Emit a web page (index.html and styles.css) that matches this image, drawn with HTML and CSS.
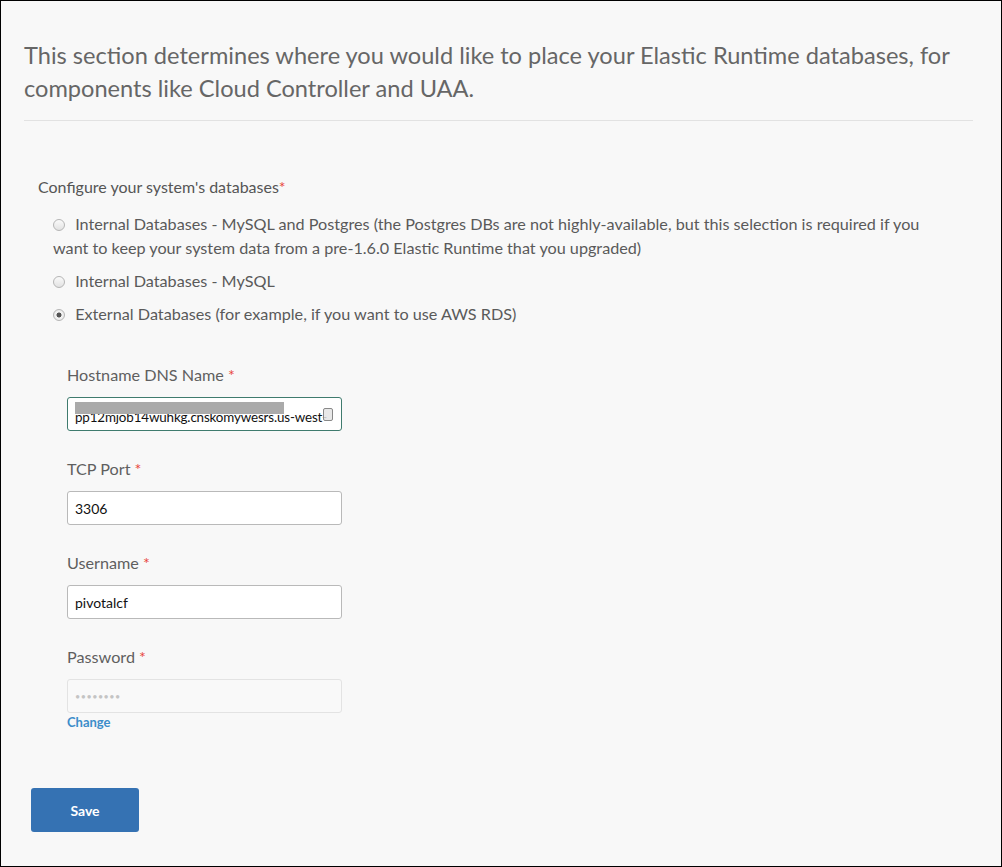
FILE: index.html
```html
<!DOCTYPE html>
<html>
<head>
<meta charset="utf-8">
<link rel="stylesheet" href="styles.css">
</head>
<body>
<div class="frame">
  <div class="intro">
    <p class="intro-text">This section determines where you would like to place your Elastic Runtime databases, for components like Cloud Controller and UAA.</p>
  </div>
  <form class="form">
    <div class="group-label">Configure your system's databases<span class="req">*</span></div>
    <div class="radios">
      <label class="radio-row"><input type="radio" name="db" class="radio"> Internal Databases - MySQL and Postgres (the Postgres DBs are not highly-available, but this selection is required if you want to keep your system data from a pre-1.6.0 Elastic Runtime that you upgraded)</label>
      <label class="radio-row"><input type="radio" name="db" class="radio"> Internal Databases - MySQL</label>
      <label class="radio-row"><input type="radio" name="db" class="radio" checked> External Databases (for example, if you want to use AWS RDS)</label>
    </div>
    <div class="fields">
      <div class="field">
        <div class="field-label">Hostname DNS Name <span class="req">*</span></div>
        <div class="input focused">
          <span class="value low">pp12mjob14wuhkg.cnskomywesrs.us-west-</span>
          <span class="redact"></span>
          <span class="kbd-icon"></span>
        </div>
      </div>
      <div class="field">
        <div class="field-label">TCP Port <span class="req">*</span></div>
        <div class="input"><span class="value">3306</span></div>
      </div>
      <div class="field">
        <div class="field-label">Username <span class="req">*</span></div>
        <div class="input"><span class="value">pivotalcf</span></div>
      </div>
      <div class="field">
        <div class="field-label">Password <span class="req">*</span></div>
        <div class="input disabled"><span class="dots">••••••••</span></div>
        <a class="change" href="#">Change</a>
      </div>
    </div>
    <button type="button" class="save">Save</button>
  </form>
</div>
</body>
</html>
```

FILE: styles.css
```css
html, body {
  margin: 0;
  padding: 0;
}
body {
  font-family: "Lato", "Open Sans", sans-serif;
  color: #5f5f5f;
}
.frame {
  box-sizing: border-box;
  width: 1002px;
  height: 867px;
  border: 1px solid #000;
  background: #f8f8f8;
  overflow: hidden;
}
.intro {
  margin: 0 28px 0 23px;
  border-bottom: 1px solid #e2e2e2;
  padding-top: 38px;
  padding-bottom: 15px;
}
.intro-text {
  margin: 0;
  font-size: 23.6px;
  line-height: 33px;
  color: #666;
  font-weight: 400;
}
.form {
  padding-left: 37px;
  padding-top: 55px;
}
.group-label {
  font-size: 16px;
  line-height: 22px;
  color: #555;
}
.req {
  color: #e8463c;
}
.radios {
  margin-top: 14px;
  padding-left: 15px;
  padding-right: 60px;
}
.radio-row {
  display: block;
  font-size: 16.2px;
  line-height: 24px;
  color: #5a5a5a;
  margin-bottom: 9px;
}
.radio {
  -webkit-appearance: none;
  appearance: none;
  width: 12px;
  height: 12px;
  margin: 0 6px 0 0;
  border-radius: 50%;
  border: 1px solid #b5b5b5;
  background: linear-gradient(#fafafa, #e2e2e2);
  box-sizing: border-box;
  vertical-align: -1px;
  position: relative;
}
.radio:checked {
  background: radial-gradient(circle, #555 0 2.2px, #f4f4f4 2.8px, #e2e2e2 100%);
}
.fields {
  padding-left: 29px;
  margin-top: 38px;
}
.field {
  margin-bottom: 27px;
}
.field-label {
  font-size: 16.2px;
  line-height: 22px;
  color: #5f5f5f;
  margin-bottom: 11px;
}
.input {
  box-sizing: border-box;
  width: 275px;
  height: 34px;
  border: 1px solid #b9b9b9;
  border-radius: 3px;
  background: #fff;
  position: relative;
  overflow: hidden;
  display: flex;
  align-items: center;
  padding-left: 7px;
}
.input.focused {
  border-color: #3f7b6e;
}
.input.disabled {
  background: #f9f9f9;
  border-color: #e3e3e3;
}
.value {
  font-size: 14px;
  color: #111;
  white-space: nowrap;
}
.value.low {
  font-size: 13.4px;
  padding-top: 6px;
  letter-spacing: -0.15px;
}
.redact {
  position: absolute;
  left: 7px;
  top: 4px;
  width: 209px;
  height: 12px;
  background: #aaa;
}
.kbd-icon {
  position: absolute;
  right: 8px;
  top: 10px;
  width: 10px;
  height: 13px;
  border: 1px solid #888;
  border-radius: 2px;
  background: rgba(228, 228, 228, 0.85);
  box-sizing: border-box;
}
.dots {
  font-size: 9px;
  color: #c4c4c4;
  letter-spacing: 0.5px;
}
.change {
  display: block;
  margin-top: 1px;
  font-size: 13px;
  font-weight: 700;
  color: #3c8dca;
  text-decoration: none;
}
.save {
  margin-top: 31px;
  margin-left: -7px;
  width: 108px;
  height: 44px;
  border: none;
  border-radius: 3px;
  background: #3572b3;
  color: #fff;
  font-family: "Lato", sans-serif;
  font-weight: 700;
  font-size: 14px;
}
```
